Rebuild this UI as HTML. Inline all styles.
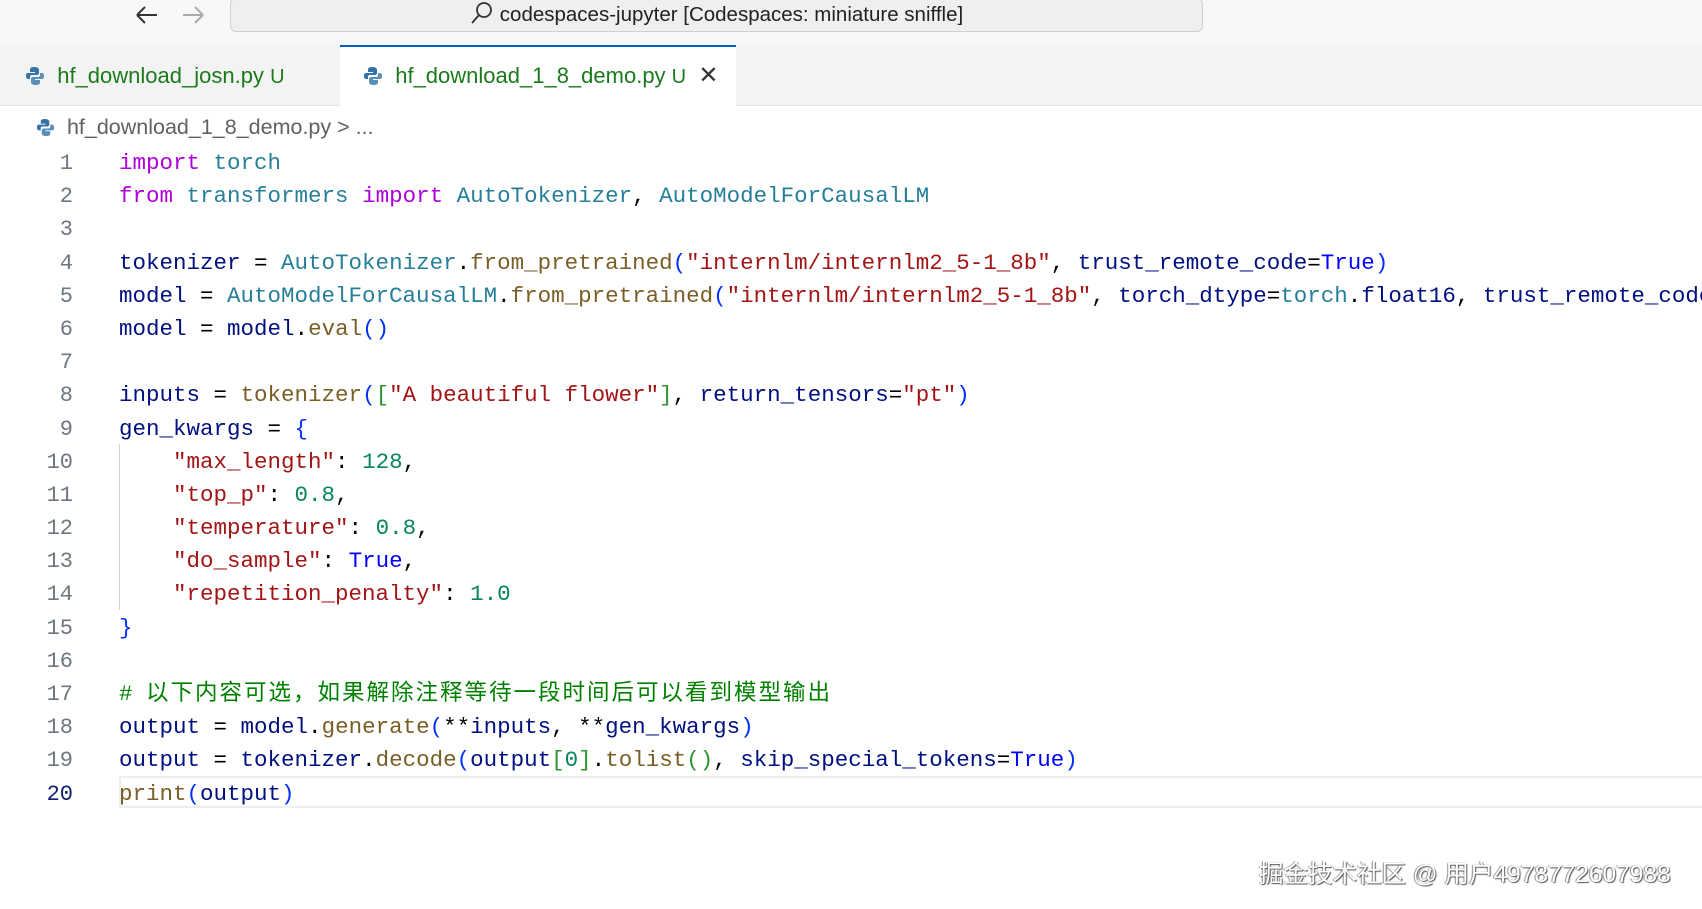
<!DOCTYPE html>
<html><head><meta charset="utf-8"><style>
body{margin:0;width:1702px;height:909px;background:#fff;overflow:hidden;position:relative;font-family:"Liberation Sans","Noto Sans CJK SC",sans-serif}
.top{position:absolute;left:0;top:0;width:1702px;height:45px;background:#f8f8f8;border-bottom:1px solid #e5e5e5}
.addr{position:absolute;left:230px;top:-2px;width:973px;height:34px;background:#efefef;border:1px solid #d0d0d0;border-radius:6px;box-sizing:border-box;text-align:center;font-size:20.5px;line-height:32px;color:#222}
.tabs{position:absolute;left:0;top:45px;width:1702px;height:60px;background:#f3f3f3;border-bottom:1px solid #e5e5e5}
.tab{position:absolute;top:0;height:60px;font-size:22px;line-height:62px;color:#1b7a1b}
.act{background:#fff;border-top:2px solid #005fb8;box-sizing:border-box;height:61px;line-height:58px}
.crumb{position:absolute;left:36px;top:115px;font-size:21.5px;color:#616161}
.code{position:absolute;left:0;top:147px;width:1702px;overflow:hidden;font-family:"Liberation Mono","Noto Sans CJK SC",monospace;font-size:22.5px}
.l{height:33.2px;line-height:33.2px;white-space:pre;position:relative}
.n{display:inline-block;width:73px;text-align:right;color:#6e7681;margin-right:46px;font-size:22px}
.k{color:#af00db}.t{color:#267f99}.v{color:#001080}.f{color:#795e26}.s{color:#a31515}.m{color:#098658}.b{color:#0000ff}.p1{color:#0431fa}.p2{color:#319331}.c{color:#008000}
.cj{letter-spacing:2px}
.guide{position:absolute;left:119px;top:444px;width:1px;height:166px;background:#d3d3d3}
.hl{position:absolute;left:119px;top:776px;width:1583px;height:32px;border:2px solid #eeeeee;border-right:none;box-sizing:border-box}
.wm{position:absolute;left:1259px;top:855px;font-size:24.5px;color:#fff;text-shadow:1px 1px 1px #555,-1px 0 1px #888;font-family:"Liberation Sans","Noto Sans CJK SC",sans-serif}
.py{display:inline-block;vertical-align:-3px}
</style></head><body>
<svg width="0" height="0" style="position:absolute"><defs><g id="py"><path d="M9 1C5 1 5 3 5 4V6H10V7H3C1 7 1 9 1 10C1 12 2 13 3 13H5V11C5 9 6 9 8 9H12C13 9 14 8 14 7V4C14 2 12 1 9 1Z" fill="#3572a5"/><path d="M11 19C15 19 15 17 15 16V14H10V13H17C19 13 19 11 19 10C19 8 18 7 17 7H15V9C15 11 14 11 12 11H8C7 11 6 12 6 13V16C6 18 8 19 11 19Z" fill="#5a8fb8"/></g></defs></svg>
<div class="top">
<svg style="position:absolute;left:134px;top:4px" width="26" height="22" viewBox="0 0 26 22"><path d="M3 11H23M3 11L11 3M3 11L11 19" stroke="#333" stroke-width="2" fill="none"/></svg>
<svg style="position:absolute;left:180px;top:4px" width="26" height="22" viewBox="0 0 26 22"><path d="M3 11H23M23 11L15 3M23 11L15 19" stroke="#aaa" stroke-width="2" fill="none"/></svg>
<div class="addr"><svg width="24" height="24" viewBox="0 0 24 24" style="vertical-align:-4px;margin-right:6px"><circle cx="14" cy="9" r="7" stroke="#333" stroke-width="1.8" fill="none"/><path d="M9 14L2 22" stroke="#333" stroke-width="1.8"/></svg>codespaces-jupyter [Codespaces: miniature sniffle]</div>
</div>
<div class="tabs">
<div class="tab" style="left:25px;width:316px"><svg class="py" width="20" height="20" viewBox="0 0 20 20"><use href="#py"/></svg>&nbsp; hf_download_josn.py <span style="font-size:20px">U</span></div>
<div class="tab act" style="left:340px;width:396px;padding-left:23px"><svg class="py" width="20" height="20" viewBox="0 0 20 20"><use href="#py"/></svg>&nbsp; hf_download_1_8_demo.py <span style="font-size:20px">U</span>&nbsp;&nbsp;<span style="color:#333;font-size:24px">✕</span></div>
</div>
<div class="crumb"><svg class="py" width="19" height="19" viewBox="0 0 20 20"><use href="#py"/></svg>&nbsp; hf_download_1_8_demo.py &gt; ...</div>
<div class="guide"></div>
<div class="hl"></div>
<div class="code">
<div class="l"><span class="n">1</span><span class="k">import</span> <span class="t">torch</span></div>
<div class="l"><span class="n">2</span><span class="k">from</span> <span class="t">transformers</span> <span class="k">import</span> <span class="t">AutoTokenizer</span>, <span class="t">AutoModelForCausalLM</span></div>
<div class="l"><span class="n">3</span></div>
<div class="l"><span class="n">4</span><span class="v">tokenizer</span> = <span class="t">AutoTokenizer</span>.<span class="f">from_pretrained</span><span class="p1">(</span><span class="s">"internlm/internlm2_5-1_8b"</span>, <span class="v">trust_remote_code</span>=<span class="b">True</span><span class="p1">)</span></div>
<div class="l"><span class="n">5</span><span class="v">model</span> = <span class="t">AutoModelForCausalLM</span>.<span class="f">from_pretrained</span><span class="p1">(</span><span class="s">"internlm/internlm2_5-1_8b"</span>, <span class="v">torch_dtype</span>=<span class="t">torch</span>.<span class="v">float16</span>, <span class="v">trust_remote_code</span></div>
<div class="l"><span class="n">6</span><span class="v">model</span> = <span class="v">model</span>.<span class="f">eval</span><span class="p1">()</span></div>
<div class="l"><span class="n">7</span></div>
<div class="l"><span class="n">8</span><span class="v">inputs</span> = <span class="f">tokenizer</span><span class="p1">(</span><span class="p2">[</span><span class="s">"A beautiful flower"</span><span class="p2">]</span>, <span class="v">return_tensors</span>=<span class="s">"pt"</span><span class="p1">)</span></div>
<div class="l"><span class="n">9</span><span class="v">gen_kwargs</span> = <span class="p1">{</span></div>
<div class="l"><span class="n">10</span>    <span class="s">"max_length"</span>: <span class="m">128</span>,</div>
<div class="l"><span class="n">11</span>    <span class="s">"top_p"</span>: <span class="m">0.8</span>,</div>
<div class="l"><span class="n">12</span>    <span class="s">"temperature"</span>: <span class="m">0.8</span>,</div>
<div class="l"><span class="n">13</span>    <span class="s">"do_sample"</span>: <span class="b">True</span>,</div>
<div class="l"><span class="n">14</span>    <span class="s">"repetition_penalty"</span>: <span class="m">1.0</span></div>
<div class="l"><span class="n">15</span><span class="p1">}</span></div>
<div class="l"><span class="n">16</span></div>
<div class="l"><span class="n">17</span><span class="c"># <span class="cj">以下内容可选，如果解除注释等待一段时间后可以看到模型输出</span></span></div>
<div class="l"><span class="n">18</span><span class="v">output</span> = <span class="v">model</span>.<span class="f">generate</span><span class="p1">(</span>**<span class="v">inputs</span>, **<span class="v">gen_kwargs</span><span class="p1">)</span></div>
<div class="l"><span class="n">19</span><span class="v">output</span> = <span class="v">tokenizer</span>.<span class="f">decode</span><span class="p1">(</span><span class="v">output</span><span class="p2">[</span><span class="m">0</span><span class="p2">]</span>.<span class="f">tolist</span><span class="p2">()</span>, <span class="v">skip_special_tokens</span>=<span class="b">True</span><span class="p1">)</span></div>
<div class="l"><span class="n" style="color:#0b216f">20</span><span class="f">print</span><span class="p1">(</span><span class="v">output</span><span class="p1">)</span></div>
</div>
<div class="wm">掘金技术社区 @ 用户4978772607988</div>
</body></html>
